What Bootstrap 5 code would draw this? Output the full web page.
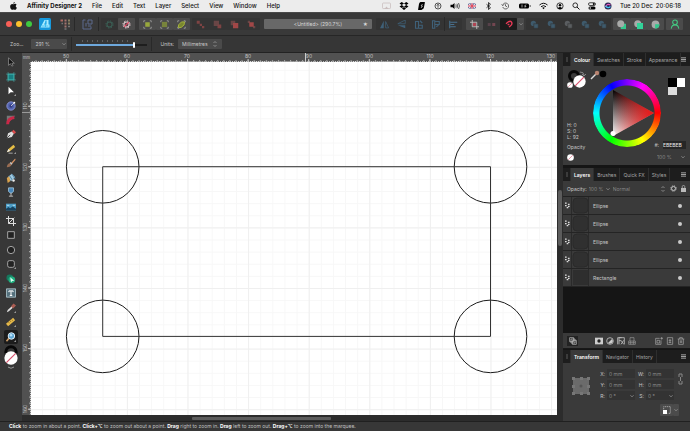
<!DOCTYPE html>
<html lang="en">
<head>
<meta charset="utf-8">
<meta name="viewport" content="width=device-width, initial-scale=1">
<title>Affinity Designer 2</title>
<link href="https://cdn.jsdelivr.net/npm/bootstrap@5.3.0/dist/css/bootstrap.min.css" rel="stylesheet">
<style>
body{font:5px/8px Inter,"Liberation Sans",sans-serif;color:#c8c8c8;background:#373737;overflow:hidden}
svg{display:block;flex:none}
button,input,select{font:inherit;color:inherit;background:none;border:0;padding:0;margin:0;min-width:0;appearance:none;border-radius:0}
a{color:inherit;text-decoration:none}
ul{list-style:none;margin:0;padding:0}
.menubar{height:12px;background:#ececec;color:#111;font-size:6px;font-weight:500;padding:0 9px 0 10px}
.menubar ul{gap:10px}
.status-icons{gap:8px}
.toolbar{height:24px;background:#393939;border-bottom:1px solid #262626;padding:0 7px 0 6px;border-top:1px solid #4a4a4a}
.light{width:6px;height:6px;border-radius:50%}
.tb{width:17px;height:12px;display:flex;align-items:center;justify-content:center;border-radius:1px}
.grp{display:flex}
.near{margin-left:2px}
.lit .tb,.tb.lit{background:#4b4b4b}
.low .tb,.tb.low{background:#343434}
.sep{width:1px;height:14px;background:#292929}
.doc-title{height:10px;background:#686868;color:#d8d8d8;border-radius:1px}
.context{height:17px;background:#363636;border-bottom:1px solid #222;padding:0 10px;font-size:5px}
.field{background:#4a4a4a;border-radius:1px;height:10px}
.slider{width:71px;height:6px;background:linear-gradient(#6ea8dc,#6ea8dc) 0 2px/58px 2px no-repeat,linear-gradient(#1e1e1e,#1e1e1e) 0 2px/100% 2px no-repeat}
.slider::-webkit-slider-thumb{appearance:none;width:2px;height:6px;background:#fff;border-radius:1px}
.tools{width:22px;background:#373737}
.tool-list{height:79%;display:grid;grid-template-rows:repeat(20,minmax(0,1fr));padding-top:2px}
.tool-list button{width:14px;display:flex;align-items:center;justify-content:center;margin:auto;height:14px}
.tool-list .on{background:#1c1c1c;border-radius:2px}
.work{display:grid;grid-template:9px minmax(0,1fr) 6px/9px minmax(0,1fr) 6px;background:#2a2a2a}
.work>svg{width:100%;height:100%}
.ruler{background:#515151;font-size:5px;fill:#c4c4c4}
.sheet{background:#fff}
.track{background:#2c2c2c}
.side{width:127px;background:#151515}
.panel-tabs{height:13px;background:#1d1d1d;color:#a6a6a6}
.panel-tabs button,.panel-tabs i{height:13px;padding:0 3px;border-right:1px solid #2e2e2e;display:block}
.panel-tabs i{width:8px;padding:4px 3px}
.panel-tabs i::before{content:"";display:block;width:2px;height:5px;background:#3b3b3b}
.panel-tabs .active{background:#3a3a3a;color:#fff;font-weight:600}
.pane{background:#3a3a3a}
.colour{display:grid;padding:4px;margin-bottom:3px;height:99px}
.colour>*{grid-area:1/1}
.wheel{display:grid;width:68px;height:68px;place-self:center;margin-bottom:5px}
.wheel>*{grid-area:1/1}
.hue{border-radius:50%;background:conic-gradient(from 90deg,red,#ff0,#0f0,#0ff,#00f,#f0f,red);mask:radial-gradient(circle,transparent 27px,#000 28px);-webkit-mask:radial-gradient(circle,transparent 27px,#000 28px)}
.hsl{line-height:6px}
.opts{height:16px;border-bottom:1px solid #222}
.layer{height:18px;background:#3a3a3a;border-bottom:1px solid #242424}
.grab{width:9px;height:17px;border-right:1px solid #2a2a2a}
.thumbnail{width:17px;height:17px;border-right:1px solid #2a2a2a}
.vis{width:4px;height:4px;border-radius:50%;background:#c9c9c9}
.layer-foot{height:16px;border-bottom:1px solid #181818;margin-bottom:1px}
.foot-btn{width:11px;height:10px;display:flex;align-items:center;justify-content:center}
.transform{height:58px;padding:6px 3px 0 9px}
.xf{display:grid;grid-template-columns:6px 28px 7px 28px;column-gap:2px;row-gap:2px;align-items:center}
.xf label{text-align:right}
.xf input{background:#333;height:9px;width:100%;padding-left:2px;color:#8a8a8a}
.statusbar{height:10px;background:#373737;border-top:1px solid #202020;padding-left:9px;color:#c0c0c0;white-space:nowrap}
.statusbar b{color:#fff}
.dim{color:#888}
</style>
<script src="https://cdn.jsdelivr.net/npm/bootstrap@5.3.0/dist/js/bootstrap.bundle.min.js"></script>
</head>
<body class="vh-100 d-flex flex-column m-0">
<svg width="0" height="0" class="position-absolute" aria-hidden="true">
 <defs>
  <symbol id="none" viewBox="0 0 12 12"><circle cx="6" cy="6" r="5.7" fill="#fff"/><path d="M2 10L10 2" stroke="#d7506c" stroke-width="1"/></symbol>
  <symbol id="gear" viewBox="0 0 12 12"><circle cx="6" cy="6" r="3.4" fill="none" stroke="currentColor" stroke-width="1.4"/><circle cx="6" cy="6" r="4.8" fill="none" stroke="currentColor" stroke-width="1.3" stroke-dasharray="1.8 1.97"/></symbol>
  <symbol id="burger" viewBox="0 0 6 6"><path d="M0 1h6M0 3h6M0 5h6" stroke="#bbb"/></symbol>
  <symbol id="handles" viewBox="0 0 12 12"><path d="M1 3V1h2M9 1h2v2M11 9v2H9M3 11H1V9" fill="none" stroke="#a8a8a8"/></symbol>
  <symbol id="bool" viewBox="0 0 12 12"><circle cx="4.500" cy="4.500" r="3.500" fill="currentColor"/><path d="M5 5h6v6H5z" fill="currentColor" stroke="#343434" stroke-width=".8"/></symbol>
  <symbol id="upd" viewBox="0 0 6 8"><path d="M1.5 3L3 1.5 4.5 3M1.5 5L3 6.500 4.500 5" fill="none" stroke="#999" stroke-width=".8"/></symbol>
  <symbol id="chev" viewBox="0 0 6 6"><path d="M1.500 2.300L3 3.800 4.500 2.300" fill="none" stroke="#999" stroke-width=".8"/></symbol>
  <symbol id="grip" viewBox="0 0 6 8"><path d="M0 1h2M0 4h2M2 6.500h2M3.500 2.500h2M3.500 5h2" stroke="#ddd" stroke-width="1.500"/></symbol>
  <symbol id="corner" viewBox="0 0 12 12"><path d="M12 9.500V12H9.500z" fill="#999"/></symbol>
 </defs>
</svg>

<header class="menubar d-flex align-items-center justify-content-between">
 <ul class="d-flex align-items-center">
  <li><svg width="7" height="8" viewBox="0 0 14 16"><path d="M9.500 0c.2 1.800-1.300 3.500-3 3.500C6.300 1.800 7.800.3 9.500 0zM7 4.500c.8 0 1.700-.8 3.200-.8 1.300 0 2.400.7 3 1.700-2.600 1.500-2.200 4.800.5 5.900-.7 1.900-2 4.200-3.500 4.200-1.200 0-1.600-.7-3-.7s-1.900.7-3 .7C2.200 15.500.3 12 .3 8.900c0-3.300 2.100-5.100 4.100-5.100 1.200 0 2 .7 2.600.7z" fill="#111"/></svg></li>
  <li><a href="#"><b>Affinity Designer 2</b></a></li><li><a href="#">File</a></li><li><a href="#">Edit</a></li><li><a href="#">Text</a></li><li><a href="#">Layer</a></li><li><a href="#">Select</a></li><li><a href="#">View</a></li><li><a href="#">Window</a></li><li><a href="#">Help</a></li>
 </ul>
 <div class="d-flex align-items-center status-icons">
  <svg width="9" height="8" viewBox="0 0 18 16"><rect x="1" y="2" width="16" height="11" rx="1.500" fill="none" stroke="#c9bdbd" stroke-width="1.500"/><path d="M5 14l4-5 4 5z" fill="#c9bdbd"/></svg>
  <svg width="10" height="8" viewBox="0 0 20 16"><path d="M5.500 0L10 3 5.500 6 1 3zM14.500 0L19 3l-4.500 3L10 3zM5.500 6L10 9l-4.500 3L1 9zM14.500 6L19 9l-4.500 3L10 9zM10 10l4 3-4 3-4-3z"/></svg>
  <svg width="9" height="8" viewBox="0 0 18 16"><path d="M7 0h8q1 0 .8 1l-2 10q-.3 2-2 3l-3 2H3q-1 0-.8-1L4 4q.4-2 1.500-3z"/><path d="M11 4L8 8h3l-3 4" stroke="#eee" fill="none" stroke-width="1.300"/></svg>
  <svg width="8" height="8" viewBox="0 0 16 16"><circle cx="8" cy="8" r="6" fill="none" stroke="#222" stroke-width="1.500"/><path d="M8 11.500V5M5.500 7L8 4.500 10.500 7" fill="none" stroke="#222" stroke-width="1.500"/></svg>
  <svg width="10" height="8" viewBox="0 0 20 16"><path d="M1 5.500h4L9 2v12l-4-3.500H1z"/><path d="M11.500 5q2 3 0 6M14 3.500q3 4.500 0 9M17 2q4 6 0 12" fill="none" stroke="#222" stroke-width="1.400"/></svg>
  <svg width="8" height="8" viewBox="0 0 16 16"><path d="M0 3h16v10H0z" fill="#37407e"/><path d="M0 3l16 10M16 3L0 13" stroke="#eee" stroke-width="2"/><path d="M8 3v10M0 8h16" stroke="#fff" stroke-width="4"/><path d="M8 3v10M0 8h16" stroke="#d02540" stroke-width="2.400"/></svg>
  <svg width="9" height="8" viewBox="0 0 18 16"><path d="M5 4.500l8 7L9 15V1l4 3.500-8 7" fill="none" stroke="#111" stroke-width="1.600"/></svg>
  <svg width="9" height="8" viewBox="0 0 18 16"><path d="M3.500 6A6 6 0 1 1 3.500 10M1 5l2.500 2.500L6 5M9 4.500V8l3 1.500" fill="none" stroke="#333" stroke-width="1.400"/></svg>
  <svg width="13" height="8" viewBox="0 0 26 16"><rect x="2" y="3" width="20" height="10" rx="3"/><path d="M23.500 6v4q2-1 2-2t-2-2z"/><path d="M8 5v6M16 5l-3 3.500h3L14 11" stroke="#eee" fill="none" stroke-width="1.300"/></svg>
  <svg width="9" height="8" viewBox="0 0 18 16"><path d="M1 6q8-7 16 0M4 9.500q5-4.500 10 0" fill="none" stroke="#111" stroke-width="2"/><path d="M6.500 11.500Q9 9.500 11.500 11.500L9 14.500z"/></svg>
  <svg width="8" height="8" viewBox="0 0 16 16"><circle cx="8" cy="8" r="6.300" fill="none" stroke="#111" stroke-width="1.600"/><circle cx="8" cy="6.500" r="2.500"/><path d="M3.500 12.500q4.500-5 9 0Q8 16 3.500 12.500z"/></svg>
  <svg width="8" height="8" viewBox="0 0 16 16"><circle cx="6.500" cy="6.500" r="4.700" fill="none" stroke="#111" stroke-width="1.700"/><path d="M10 10l5 5" stroke="#111" stroke-width="2"/></svg>
  <svg width="8" height="8" viewBox="0 0 16 16"><rect x="1" y="1.500" width="14" height="5.500" rx="2.700" fill="none" stroke="#111" stroke-width="1.500"/><circle cx="11.500" cy="4.200" r="2"/><rect x="1" y="9" width="14" height="6" rx="3"/><circle cx="4.500" cy="12" r="1.600" fill="#eee"/></svg>
  <svg width="8" height="8" viewBox="0 0 16 16"><circle cx="8" cy="8" r="7" fill="#2b2552"/><path d="M3 10q3-8 10-4" stroke="#e25ac0" stroke-width="2.500" fill="none"/><path d="M3 8q5 6 10 1" stroke="#40c4ee" stroke-width="2.500" fill="none"/></svg>
  <span class="text-nowrap">Tue 20 Dec&nbsp; 20:06:18</span>
 </div>
</header>

<div class="toolbar d-flex align-items-center">
 <div class="d-flex gap-1 me-1"><span class="light" style="background:#f95f57"></span><span class="light" style="background:#fbc02d"></span><span class="light" style="background:#3fc93f"></span></div>
 <button class="tb" aria-label="Designer"><svg width="12" height="12" viewBox="0 0 24 24"><rect width="24" height="24" rx="3" fill="#1799dc"/><path d="M3 19L11 4h4l-5 9h5V4h4v9h2v6z" fill="#a8ecff"/><path d="M5 16h14M13 5v13" stroke="#2ab3ee" stroke-width="1.500"/></svg></button>
 <button class="tb ms-1" aria-label="Pixel"><svg width="11" height="11" viewBox="0 0 22 22"><path d="M1 3h5" stroke="#b06a62" stroke-width="4"/><path d="M9 3h4M9 9h4M9 15h4" stroke="#a3746f" stroke-width="4"/><path d="M16 3h4M16 9h4" stroke="#8b8164" stroke-width="4"/><path d="M3 9h3M16 15h4M9 20h4" stroke="#777" stroke-width="3"/></svg></button>
 <span class="sep"></span>
 <button class="tb ms-1" aria-label="Export"><svg width="11" height="11" viewBox="0 0 22 22"><path d="M7 2H2v18h16v-5M12 2h8v8h-8zM8 8v7M12 14h6" fill="none" stroke="#5d6a8e" stroke-width="2"/></svg></button>
 <span class="sep near"></span>
 <div class="grp near"><button class="tb low" aria-label="Sync" style="color:#3b6156"><svg width="9" height="9"><use href="#gear"/></svg></button><button class="tb lit" aria-label="Defaults" style="color:#e6cdd2"><svg width="9" height="9" viewBox="0 0 12 12"><use href="#gear"/><path d="M3 9l6-6" stroke="#d8405c" stroke-width="1.500"/></svg></button></div>
 <div class="grp lit ms-1">
  <button class="tb" aria-label="Align box"><svg width="9" height="9" viewBox="0 0 12 12"><use href="#handles"/><path d="M3 3h6v6H3z" fill="#98a83d"/></svg></button>
  <button class="tb" aria-label="Cycle box"><svg width="9" height="9" viewBox="0 0 12 12"><use href="#handles"/><path d="M2.500 2.500h7v7h-7z" fill="#78843c"/></svg></button>
  <button class="tb" aria-label="Rotation"><svg width="9" height="9" viewBox="0 0 12 12"><use href="#handles"/><path d="M2 6.500l4-4h4l-.5 4-4 3.500H2z" fill="#79862f" stroke="#b4c53e"/></svg></button>
 </div>
 <div class="grp low near" style="color:#7e4343">
  <button class="tb" aria-label="Back"><svg width="9" height="9" viewBox="0 0 12 12"><path d="M1 1h4v4H1zM5 5h3v3H5zM8 8h3v3H8z" fill="currentColor"/></svg></button>
  <button class="tb" aria-label="Backward"><svg width="9" height="9" viewBox="0 0 12 12"><path d="M1 1h7v7H1z" fill="#694646"/><path d="M6 6h5v5H6z" fill="currentColor"/></svg></button>
  <button class="tb" aria-label="Forward"><svg width="9" height="9" viewBox="0 0 12 12"><path d="M1 1h6v3H4v3H1z" fill="#694646"/><path d="M4 4h7v7H4z" fill="#a14747"/></svg></button>
  <button class="tb" aria-label="Front"><svg width="9" height="9" viewBox="0 0 12 12"><path d="M1 1h3v3H1zM8 8h3v3H8z" fill="#694646"/><path d="M3 3h6v6H3z" fill="#a14747"/></svg></button>
 </div>
 <div class="doc-title flex-grow-1 d-flex align-items-center justify-content-center position-relative mx-1"><span>&lt;Untitled&gt; (290.7%)</span><span class="position-absolute end-0 me-1">★</span></div>
 <div class="grp low" style="color:#3f6078">
  <button class="tb" aria-label="Flip horizontal"><svg width="9" height="9" viewBox="0 0 12 12"><path d="M5 1v10H0z" fill="currentColor"/><path d="M7.500 2v8.500h4z" fill="none" stroke="currentColor"/></svg></button>
  <button class="tb" aria-label="Flip vertical"><svg width="9" height="9" viewBox="0 0 12 12"><path d="M11 5H1l10-5z" fill="none" stroke="currentColor"/><path d="M11 7H1l10 4z" fill="currentColor"/></svg></button>
  <button class="tb" aria-label="Rotate left"><svg width="9" height="9" viewBox="0 0 12 12"><path d="M2 11V2h4v9zM6 7h5v4H6zM8 1l3 3" fill="none" stroke="currentColor" stroke-width="1.500"/></svg></button>
  <button class="tb" aria-label="Rotate right"><svg width="9" height="9" viewBox="0 0 12 12"><path d="M2 1h3v10H2zM5 2h6v4H5zM7 9l3-2" fill="none" stroke="currentColor" stroke-width="1.500"/></svg></button>
 </div>
 <span class="sep"></span>
 <button class="tb low" aria-label="Alignment" style="color:#48708e"><svg width="9" height="9" viewBox="0 0 12 12"><path d="M1 1v10M2 3h9M2 6h5M2 9h7" stroke="currentColor" stroke-width="1.500"/></svg></button>
 <div class="grp ms-1">
  <button class="tb lit" aria-label="Force pixels"><svg width="9" height="9" viewBox="0 0 12 12"><path d="M3 0v9h9M0 3h9v9" fill="none" stroke="#c5bfc0" stroke-width="1.200"/><path d="M4 4h4v4H4z" fill="#b04553"/></svg></button>
  <button class="tb low" aria-label="Move by pixels"><svg width="9" height="9" viewBox="0 0 12 12"><path d="M1 4h4v4H1z" fill="#57414a"/><path d="M7 4h4v4H7z" fill="#734650"/></svg></button>
  <button class="tb" aria-label="Snapping" style="background:#1b1b1b"><svg width="8" height="8" viewBox="0 0 12 12"><path d="M1.500 5.500L4.500 3q4-2.500 5.500.5T8 9L6 10.500M4 7.500L6.500 6" fill="none" stroke="#ec3957" stroke-width="2"/></svg></button>
  <button class="lit tb" style="width:7px" aria-label="Snapping options"><svg width="6" height="6"><use href="#chev"/></svg></button>
 </div>
 <div class="grp low near" style="color:#3e5a6c">
  <button class="tb" aria-label="Add"><svg width="9" height="9"><use href="#bool"/></svg></button><button class="tb" aria-label="Subtract"><svg width="9" height="9"><use href="#bool"/></svg></button><button class="tb" aria-label="Intersect" style="color:#5a5d60"><svg width="9" height="9"><use href="#bool"/></svg></button><button class="tb" aria-label="Xor"><svg width="9" height="9"><use href="#bool"/></svg></button><button class="tb" aria-label="Divide"><svg width="9" height="9"><use href="#bool"/></svg></button>
 </div>
 <div class="grp lit near">
  <button class="tb" aria-label="Insert behind"><svg width="9" height="9" viewBox="0 0 12 12"><path d="M5 5h7v7H5z" fill="#32c98d"/><circle cx="5" cy="5" r="4.700" fill="#a8aaa9"/></svg></button>
  <button class="tb" aria-label="Insert above"><svg width="9" height="9" viewBox="0 0 12 12"><circle cx="5" cy="5" r="4.700" fill="#a8aaa9"/><path d="M4 4h8v8H4z" fill="#32d399"/></svg></button>
  <button class="tb" aria-label="Insert inside"><svg width="9" height="9" viewBox="0 0 12 12"><circle cx="6" cy="6" r="5.200" fill="#a8aaa9"/><path d="M5.500 5.500h5.700q0 5.700-5.700 5.700z" fill="#32c98d"/></svg></button>
 </div>
 <button class="tb lit near" aria-label="Account"><svg width="10" height="10" viewBox="0 0 12 12"><circle cx="6" cy="4" r="2.800" fill="none" stroke="#43c982" stroke-width="1.300"/><path d="M1.500 11.500q.5-4.500 4.500-4.500t4.500 4.500" fill="none" stroke="#43c982" stroke-width="1.300"/></svg></button>
</div>

<div class="context d-flex align-items-center">
 <label for="zoom">Zoo...</label>
 <div class="field d-flex align-items-center ms-2 ps-1" style="width:36px"><input id="zoom" class="w-100" value="291 %"><svg width="6" height="6"><use href="#chev"/></svg></div>
 <span class="sep mx-1"></span>
 <div><svg width="71" height="2" class="mb-0"><path d="M6 1h50" stroke="#888" stroke-dasharray="1 4"/></svg><input class="slider d-block" type="range" min="0" max="100" value="82" aria-label="Zoom level"></div>
 <span class="sep ms-1 me-2"></span>
 <label for="units">Units:</label>
 <div class="field d-flex align-items-center ms-1 px-1"><select id="units"><option>Millimetres</option></select><svg width="6" height="8" class="ms-1"><use href="#upd"/></svg></div>
</div>

<main class="flex-grow-1 d-flex" style="min-height:0">
 <aside class="tools d-flex flex-column align-items-center">
  <div class="tool-list">
   <button aria-label="Move"><svg width="10" height="10" viewBox="0 0 12 12"><path d="M3 1v9l2.300-2L7 11l1.500-.8L7 7.500h3z" fill="#151515" stroke="#aaa" stroke-width=".7"/></svg></button>
   <button aria-label="Artboard"><svg width="10" height="10" viewBox="0 0 12 12"><path d="M2.500 2.500h7v7h-7z" fill="#187f82" stroke="#36b3ac"/><path d="M2.500 0v12M9.500 0v12M0 2.500h12M0 9.500h12" stroke="#4ab5b3" stroke-width=".6"/></svg></button>
   <button aria-label="Node"><svg width="10" height="10" viewBox="0 0 12 12"><path d="M3 1v9l2.500-2.500H9.500z" fill="#fff"/><use href="#corner"/></svg></button>
   <button aria-label="Contour"><svg width="10" height="10" viewBox="0 0 12 12"><circle cx="6" cy="6" r="5" fill="#5364ae" stroke="#9199df" stroke-width="1"/><circle cx="6" cy="6" r="2" fill="#353c85"/><path d="M6 6l4-4" stroke="#ddd"/><path d="M9 1h2v2H9z" fill="#fff"/></svg></button>
   <button aria-label="Corner"><svg width="10" height="10" viewBox="0 0 12 12"><path d="M1 1h10L1 11z" fill="#777"/><path d="M2 11Q2 4 10 3" fill="none" stroke="#c92747" stroke-width="3.500"/></svg></button>
   <button aria-label="Pen"><svg width="10" height="10" viewBox="0 0 12 12"><path d="M1 11l1.500-6L7 3l2.500 2.500L7 9.500z" fill="#ddd"/><path d="M7 3l2-2 3 3-2 2z" fill="#dc4b4b"/><path d="M1 11l4-4" stroke="#333"/></svg></button>
   <button aria-label="Pencil"><svg width="10" height="10" viewBox="0 0 12 12"><path d="M1 10l2-4 6-5 2 2.500-6 5z" fill="#e5bd45"/><path d="M1 10l2-4 2 2.500z" fill="#eee"/><path d="M3 11h5" stroke="#bbb"/><use href="#corner"/></svg></button>
   <button aria-label="Vector brush"><svg width="10" height="10" viewBox="0 0 12 12"><path d="M6 6l5-5.500L11.500 2 7.500 7z" fill="#d99362"/><path d="M1 11q0-4 4-5l2 1.500Q6 11 1 11z" fill="#996d52"/><path d="M5 5.500l2.300 2" stroke="#ccc" stroke-width="1.500"/></svg></button>
   <button aria-label="Fill"><svg width="10" height="10" viewBox="0 0 12 12"><path d="M2 5l5-4 4 4-5 5z" fill="#9fc9df"/><path d="M1 6l3-2 1 6-3 2z" fill="#d9a34d"/><path d="M4 3l4 6M7 1l4 6" stroke="#437a9c"/><circle cx="9" cy="9" r="1.500" fill="#eee"/></svg></button>
   <button aria-label="Transparency"><svg width="10" height="10" viewBox="0 0 12 12"><path d="M3 1h6v4q-3 5-6 0z" fill="#4585ba" stroke="#b7d7e7" stroke-width=".8"/><path d="M6 7v4M3.500 11h5" stroke="#ccc"/></svg></button>
   <button aria-label="Place image"><svg width="10" height="10" viewBox="0 0 12 12"><path d="M0 2h12v8H0z" fill="#4b9cc6"/><path d="M0 8l3-2 2 1.500 3-2 4 2.500v2H0z" fill="#17425f"/><path d="M1 4h3M8 4h3" stroke="#c7e8f4"/></svg></button>
   <button aria-label="Crop"><svg width="10" height="10" viewBox="0 0 12 12"><path d="M3 0v9h9M0 3h9v9M3 9l7-7" fill="none" stroke="#ddd" stroke-width="1.200"/></svg></button>
   <button aria-label="Rectangle"><svg width="10" height="10" viewBox="0 0 12 12"><path d="M2 2h8v8H2z" fill="#222" stroke="#bbb"/></svg></button>
   <button aria-label="Ellipse"><svg width="10" height="10" viewBox="0 0 12 12"><circle cx="6" cy="6" r="4.400" fill="#222" stroke="#bbb"/></svg></button>
   <button aria-label="Rounded rectangle"><svg width="10" height="10" viewBox="0 0 12 12"><rect x="2" y="2" width="8" height="8" rx="2" fill="#222" stroke="#bbb"/><use href="#corner"/></svg></button>
   <button aria-label="Shape builder"><svg width="10" height="10" viewBox="0 0 12 12"><circle cx="4.500" cy="4.500" r="4" fill="#16775d"/><circle cx="7" cy="7" r="4" fill="#22af80"/><path d="M5 4l5 4-2.500.3L6 10z" fill="#d9fff0"/></svg></button>
   <button aria-label="Text"><svg width="10" height="10" viewBox="0 0 12 12"><path d="M.5 1h11v10H.5z" fill="#54707c" stroke="#b4cdd5"/><path d="M3.500 5V3.500h5V5M6 3.500v5.500M4.500 9h3" fill="none" stroke="#fff" stroke-width="1.200"/></svg></button>
   <button aria-label="Colour picker"><svg width="10" height="10" viewBox="0 0 12 12"><path d="M1 11l1-2.500L7 4l1.500 1.500L3.500 10z" fill="#ddd"/><path d="M6 4l3-3.500L12 3 8.500 6.500z" fill="#ab5d53"/><use href="#corner"/></svg></button>
   <button aria-label="Measure"><svg width="10" height="10" viewBox="0 0 12 12"><path d="M0 8l8.500-7L11 4l-8.500 7z" fill="#e5b94a"/><path d="M3 6l1 1.500M5 4.500L6 6M7 3l1 1.500" stroke="#856318" stroke-width=".8"/><use href="#corner"/></svg></button>
   <button class="on" aria-label="Zoom"><svg width="10" height="10" viewBox="0 0 12 12"><path d="M4 7l-3.500 4" stroke="#c99a66" stroke-width="2"/><circle cx="6.500" cy="4.800" r="3.900" fill="#5da6d4" stroke="#e1edf5" stroke-width="1.200"/><circle cx="6" cy="4" r="1.500" fill="#b9e2fa"/><use href="#corner"/></svg></button>
  </div>
  <button aria-label="Fill and stroke"><svg width="14" height="26" viewBox="0 0 14 26"><circle cx="7" cy="8" r="5.200" fill="none" stroke="#080808" stroke-width="3"/><use href="#none" x="0" y="7" width="14" height="14"/><path d="M4 23q3 2.500 6 0" fill="none" stroke="#999"/></svg></button>
 </aside>

 <section class="work flex-grow-1">
  <svg class="ruler"><text x="1" y="6" style="font-size:4px">mm</text></svg>
  <svg class="ruler">
   <defs>
    <pattern id="h1" x="35.300" width="2.020" height="9" patternUnits="userSpaceOnUse"><path d="M0 8h1v1H0z" fill="#ddd"/></pattern>
    <pattern id="h2" x="34.800" width="6.060" height="9" patternUnits="userSpaceOnUse"><path d="M0 7h1v2H0z" fill="#aaa"/></pattern>
    <pattern id="h3" x="34.800" width="60.600" height="9" patternUnits="userSpaceOnUse"><path d="M0 6h1v3H0z" fill="#ccc"/></pattern>
   </defs>
   <rect width="100%" height="9" fill="url(#h1)"/><rect width="100%" height="9" fill="url(#h2)"/><rect width="100%" height="9" fill="url(#h3)"/>
   <path d="M274.500 0v9" stroke="#ccc"/>
   <g text-anchor="middle"><text x="35" y="5">50</text><text x="96" y="5">60</text><text x="156" y="5">70</text><text x="217" y="5">80</text><text x="278" y="5">90</text><text x="338" y="5">100</text><text x="399" y="5">110</text><text x="459" y="5">120</text><text x="520" y="5">130</text></g>
  </svg>
  <svg class="track"></svg>
  <svg class="ruler">
   <defs>
    <pattern id="v1" y="44.200" width="9" height="2.020" patternUnits="userSpaceOnUse"><path d="M8 0h1v1H8z" fill="#ddd"/></pattern>
    <pattern id="v2" y="43.700" width="9" height="6.060" patternUnits="userSpaceOnUse"><path d="M7 0h2v1H7z" fill="#aaa"/></pattern>
    <pattern id="v3" y="43.700" width="9" height="60.600" patternUnits="userSpaceOnUse"><path d="M6 0h3v1H6z" fill="#ccc"/></pattern>
   </defs>
   <rect width="9" height="100%" fill="url(#v1)"/><rect width="9" height="100%" fill="url(#v2)"/><rect width="9" height="100%" fill="url(#v3)"/>
   <path d="M0 50.500h9" stroke="#999"/>
   <g text-anchor="middle"><text transform="translate(5 44) rotate(-90)">110</text><text transform="translate(5 105) rotate(-90)">120</text><text transform="translate(5 165) rotate(-90)">130</text><text transform="translate(5 226) rotate(-90)">140</text><text transform="translate(5 286) rotate(-90)">150</text><text transform="translate(5 347) rotate(-90)">160</text></g>
  </svg>
  <svg class="sheet">
   <defs>
    <pattern id="g1" x="35.300" y="44.200" width="12.120" height="12.120" patternUnits="userSpaceOnUse"><path d="M0 0H12.120M0 0V12.120" stroke="#f7f7f7" stroke-width="2"/></pattern>
    <pattern id="g2" x="35.300" y="44.200" width="60.600" height="60.600" patternUnits="userSpaceOnUse"><path d="M0 0H60.600M0 0V60.600" stroke="#efefef" stroke-width="2"/></pattern>
   </defs>
   <rect width="100%" height="100%" fill="url(#g1)"/><rect width="100%" height="100%" fill="url(#g2)"/>
   <g fill="none" stroke="#1c1c1c"><circle cx="71.700" cy="104.800" r="36.300"/><circle cx="459.500" cy="104.800" r="36.300"/><circle cx="71.700" cy="274.400" r="36.300"/><circle cx="459.500" cy="274.400" r="36.300"/><path d="M71.700 104.700H459.500V274.400H71.700z" stroke="#333"/></g>
  </svg>
  <svg class="track"><rect x="1" y="128" width="4" height="56" rx="2" fill="#5c5c5c"/></svg>
  <svg class="track"></svg>
  <svg class="track"><rect x="161" y="2" width="139" height="3" rx="1" fill="#5c5c5c"/></svg>
  <svg class="track"></svg>
 </section>

 <aside class="side d-flex flex-column">
  <nav class="panel-tabs d-flex align-items-center"><i></i><button class="active">Colour</button><button>Swatches</button><button>Stroke</button><button>Appearance</button><svg class="ms-auto me-1" width="5" height="5"><use href="#burger"/></svg></nav>
  <div class="pane colour">
   <div class="wheel"><div class="hue"></div>
    <svg width="68" height="68"><defs><linearGradient id="tr" x1="0" x2="1" y1="0" y2="0"><stop stop-color="#f00" stop-opacity="0"/><stop offset="1" stop-color="#f01414"/></linearGradient><linearGradient id="bw" x1="0" x2="0" y1="0" y2="1"><stop stop-color="#000"/><stop offset="1" stop-color="#fff"/></linearGradient></defs>
    <path d="M20 11L61 34 20 57z" fill="url(#bw)"/><path d="M20 11L61 34 20 57z" fill="url(#tr)"/><circle cx="65" cy="34" r="1.900" fill="#e01020" stroke="#fff"/><circle cx="20" cy="54.500" r="2.500" fill="#fff"/></svg>
   </div>
   <div class="d-flex flex-column justify-content-between position-relative" style="justify-self:start">
    <svg width="40" height="20" viewBox="0 0 40 20"><circle cx="7" cy="6" r="4.500" fill="none" stroke="#080808" stroke-width="3"/><use href="#none" x="0" y="12" width="6" height="6"/><use href="#none" x="6" y="5" width="13" height="13"/><path d="M13 2q4 0 4 3M15 4l2 2 2-2" fill="none" stroke="#999" stroke-width=".8"/><path d="M24 9l5-5" stroke="#ddd" stroke-width="1.500"/><circle cx="30" cy="3" r="2.200" fill="#b88471"/><circle cx="36" cy="4" r="3.300" fill="#000"/></svg>
    <div class="hsl"><div>H: 0</div><div>S: 0</div><div>L: 92</div><label for="op" class="d-block my-1">Opacity</label><svg width="7" height="7"><use href="#none"/></svg></div>
   </div>
   <div class="d-flex flex-column justify-content-between align-items-end" style="justify-self:end">
    <svg width="18" height="25"><path d="M0 8h9v9H0z" fill="#000"/><path d="M9 8h8v9H9z" fill="#fff"/><path d="M0 17h9v8H0z" fill="#ddd"/></svg>
    <div class="d-flex flex-column align-items-end gap-1">
     <div class="d-flex"><label for="hex">#:</label><input id="hex" value="EBEBEB" class="ms-1" style="width:23px;background:#262626;color:#eee"></div>
     <div class="d-flex align-items-center dim"><input id="op" value="100 %" style="width:23px"><svg width="6" height="6"><use href="#chev"/></svg></div>
    </div>
   </div>
  </div>

  <nav class="panel-tabs d-flex align-items-center"><i></i><button class="active">Layers</button><button>Brushes</button><button>Quick FX</button><button>Styles</button><svg class="ms-auto me-1" width="5" height="5"><use href="#burger"/></svg></nav>
  <div class="pane opts d-flex align-items-center px-1"><label for="lop">Opacity:</label><input id="lop" class="dim near" value="100 %" style="width:16px"><svg width="6" height="6"><use href="#chev"/></svg><select class="dim near flex-grow-1" aria-label="Blend mode"><option>Normal</option></select><svg width="6" height="8" class="me-1"><use href="#upd"/></svg><svg width="7" height="7" style="color:#ddd"><use href="#gear"/></svg><svg class="ms-1" width="5" height="7" viewBox="0 0 10 14"><path d="M2.500 6V3q0-2 2.500-2t2.500 2v3" fill="none" stroke="#bbb" stroke-width="1.500"/><path d="M0 6h10v8H0z" fill="#bbb"/></svg></div>
  <ul>
   <li class="layer d-flex align-items-center"><span class="grab d-flex align-items-center justify-content-center"><svg width="5" height="7"><use href="#grip"/></svg></span><span class="thumbnail"><svg width="16" height="17"><rect x="1" y="1" width="15" height="15" rx="4" fill="#303030" stroke="#2a2a2a"/></svg></span><span class="ms-1">Ellipse</span><input class="vis ms-auto me-2" type="checkbox" checked aria-label="Visible"></li>
   <li class="layer d-flex align-items-center"><span class="grab d-flex align-items-center justify-content-center"><svg width="5" height="7"><use href="#grip"/></svg></span><span class="thumbnail"><svg width="16" height="17"><rect x="1" y="1" width="15" height="15" rx="4" fill="#303030" stroke="#2a2a2a"/></svg></span><span class="ms-1">Ellipse</span><input class="vis ms-auto me-2" type="checkbox" checked aria-label="Visible"></li>
   <li class="layer d-flex align-items-center"><span class="grab d-flex align-items-center justify-content-center"><svg width="5" height="7"><use href="#grip"/></svg></span><span class="thumbnail"><svg width="16" height="17"><rect x="1" y="1" width="15" height="15" rx="4" fill="#303030" stroke="#2a2a2a"/></svg></span><span class="ms-1">Ellipse</span><input class="vis ms-auto me-2" type="checkbox" checked aria-label="Visible"></li>
   <li class="layer d-flex align-items-center"><span class="grab d-flex align-items-center justify-content-center"><svg width="5" height="7"><use href="#grip"/></svg></span><span class="thumbnail"><svg width="16" height="17"><rect x="1" y="1" width="15" height="15" rx="4" fill="#303030" stroke="#2a2a2a"/></svg></span><span class="ms-1">Ellipse</span><input class="vis ms-auto me-2" type="checkbox" checked aria-label="Visible"></li>
   <li class="layer d-flex align-items-center"><span class="grab d-flex align-items-center justify-content-center"><svg width="5" height="7"><use href="#grip"/></svg></span><span class="thumbnail"><svg width="16" height="17"><path d="M1 1h15v15H1z" fill="#2e2e2e"/></svg></span><span class="ms-1">Rectangle</span><input class="vis ms-auto me-2" type="checkbox" checked aria-label="Visible"></li>
  </ul>
  <div class="pane layer-foot d-flex align-items-center mt-auto px-1">
   <button class="foot-btn me-auto" style="background:#222" aria-label="Edit all layers"><svg width="8" height="8" viewBox="0 0 12 12"><path d="M1 1h6v6H1zM3 3h6v6H3zM5 5h6v6H5z" fill="#222" stroke="#ccc"/></svg></button>
   <button class="foot-btn" aria-label="Mask"><svg width="8" height="8" viewBox="0 0 12 12"><path d="M0 1h12v10H0z" fill="#ccc"/><circle cx="6" cy="6" r="2.500" fill="#222"/></svg></button>
   <button class="foot-btn" aria-label="Adjustment"><svg width="8" height="8" viewBox="0 0 12 12"><circle cx="6" cy="6" r="5" fill="none" stroke="#bbb" stroke-width="1.300"/><path d="M3 9l6-6q3 4-1 6.500-3 1.500-5-.5z" fill="#ccc"/></svg></button>
   <button class="foot-btn" aria-label="Effects"><svg width="8" height="8" viewBox="0 0 12 12"><path d="M1 11V1h10v10M7 1H3v10M3 5.500h3M6 5l4 6M10 5l-4 6" fill="none" stroke="#bbb" stroke-width="1.300"/></svg></button>
   <button class="foot-btn me-3" aria-label="Live filter"><svg width="8" height="8" viewBox="0 0 12 12"><path d="M3 6V1h6v5M1 11V6h10v5zM1 8.500h10M4 6v5M8 6v5" fill="none" stroke="#999"/></svg></button>
   <button class="foot-btn" aria-label="Group"><svg width="8" height="8" viewBox="0 0 12 12"><path d="M9 5v6H1V2h6M3 5h4v4H3zM10 0v4M8 2h4" fill="none" stroke="#aaa"/></svg></button>
   <button class="foot-btn" aria-label="New layer"><svg width="8" height="8" viewBox="0 0 12 12"><path d="M2 1h8v10H2zM6 3v6M4 5h4M4 8h4" fill="none" stroke="#aaa"/></svg></button>
   <button class="foot-btn" aria-label="Delete"><svg width="8" height="8" viewBox="0 0 12 12"><path d="M1 3h10M4 3V1h4v2M2.500 3v8h7V3M5 5v4M7 5v4" fill="none" stroke="#aaa"/></svg></button>
  </div>

  <nav class="panel-tabs d-flex align-items-center"><i></i><button class="active">Transform</button><button>Navigator</button><button>History</button><svg class="ms-auto me-1" width="5" height="5"><use href="#burger"/></svg></nav>
  <div class="pane transform">
   <div class="d-flex align-items-start">
    <svg width="18" height="18" class="mt-2 me-auto"><path d="M1 1h16v16H1z" fill="#6b6b6b"/><path d="M0 0h3v3H0zM8 0h3v3H8zM15 0h3v3h-3zM0 8h3v3H0zM15 8h3v3h-3zM0 15h3v3H0zM8 15h3v3H8zM15 15h3v3h-3z" fill="#777"/><circle cx="9" cy="9" r="1.500" fill="#555"/></svg>
    <div class="xf">
     <label for="x">X:</label><input id="x" value="0 mm"><label for="w">W:</label><input id="w" value="0 mm">
     <label for="y">Y:</label><input id="y" value="0 mm"><label for="h">H:</label><input id="h" value="0 mm">
     <label for="r">R:</label><div class="d-flex align-items-center" style="background:#333"><input id="r" value="0 °"><svg width="6" height="6"><use href="#chev"/></svg></div><label for="s">S:</label><div class="d-flex align-items-center" style="background:#333"><input id="s" value="0 °"><svg width="6" height="6"><use href="#chev"/></svg></div>
    </div>
    <svg width="5" height="12" class="mx-1 mt-1" viewBox="0 0 5 12"><path d="M1 4V1h3v3M1 8v3h3V8M2.500 4v4" fill="none" stroke="#888"/></svg>
   </div>
   <div class="d-flex justify-content-end pe-2 mt-1"><button class="lit tb" style="width:13px" aria-label="Scale mode"><svg width="8" height="8" viewBox="0 0 12 12"><path d="M1 5V1h10v10H7" fill="none" stroke="#ccc" stroke-dasharray="2 1"/><path d="M0 6h6v6H0z" fill="#fff"/></svg></button><button class="lit tb" style="width:6px" aria-label="Scale options"><svg width="6" height="6"><use href="#chev"/></svg></button></div>
  </div>
 </aside>
</main>
<footer class="statusbar"><b>Click</b> to zoom in about a point. <b>Click+⌥</b> to zoom out about a point. <b>Drag</b> right to zoom in. <b>Drag</b> left to zoom out. <b>Drag+⌥</b> to zoom into the marquee.</footer>
</body>
</html>
